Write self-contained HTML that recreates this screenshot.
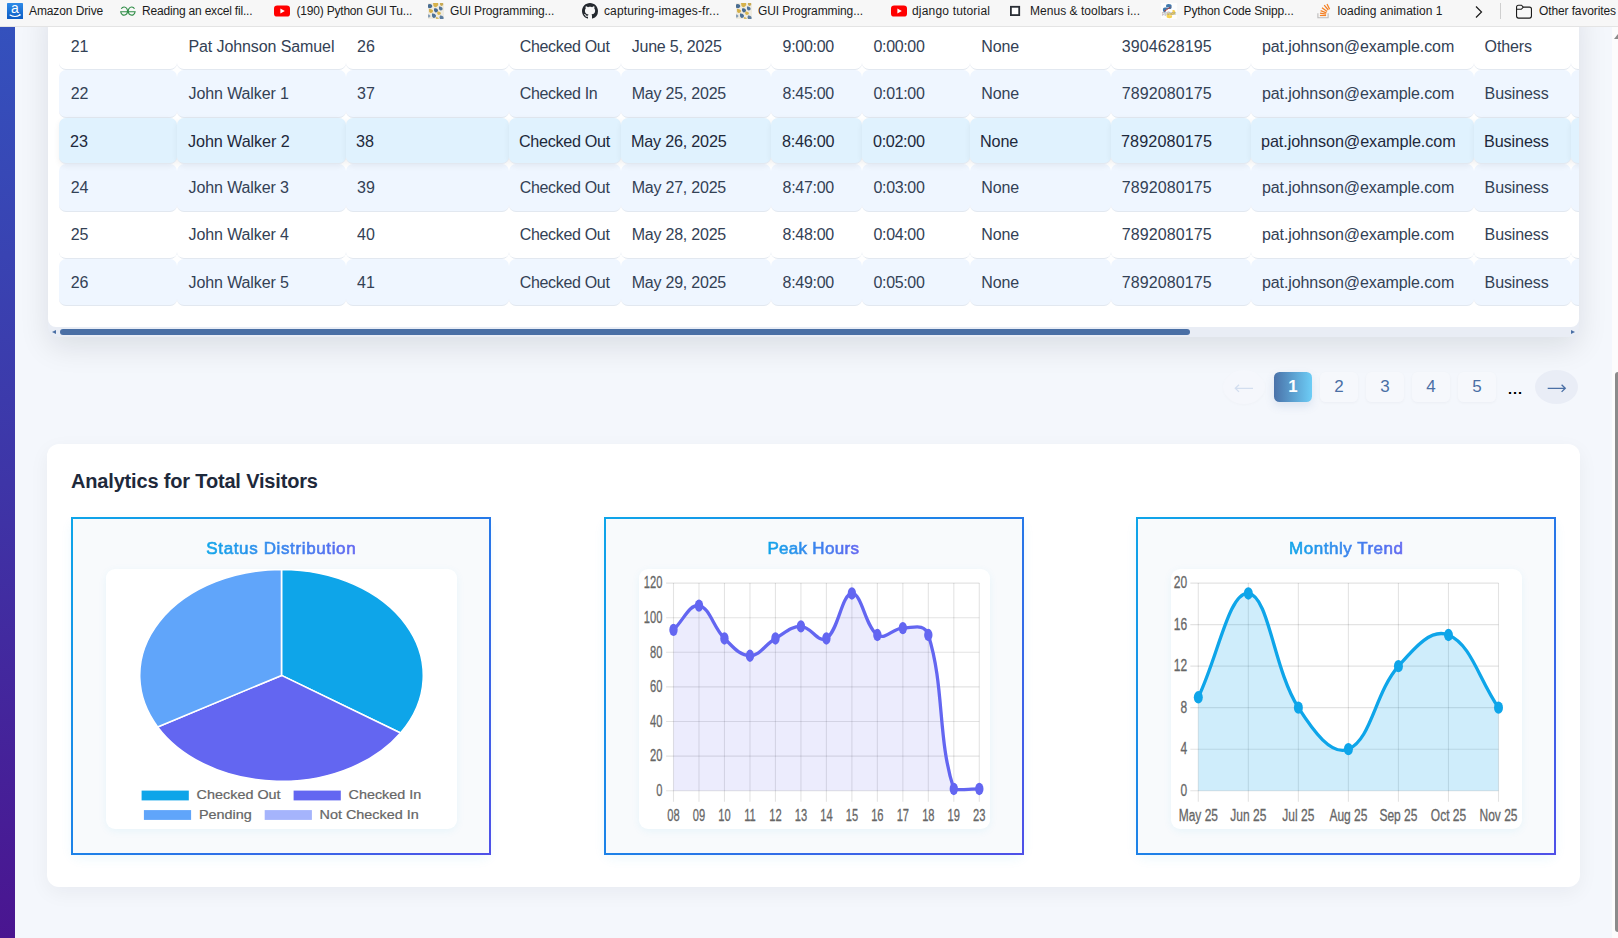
<!DOCTYPE html>
<html lang="en">
<head>
<meta charset="utf-8">
<title>Visitors</title>
<style>
*{box-sizing:border-box}
html,body{margin:0;padding:0}
body{width:1618px;height:938px;overflow:hidden;position:relative;background:#f4f7fc;font-family:"Liberation Sans",sans-serif;color:#334155}
/* browser favourites bar */
#bar{position:absolute;left:0;top:0;width:1618px;height:27px;background:#f7f7f7;border-bottom:1px solid #e4e4e4;z-index:20;font-size:12px;color:#1b1b1b}
#bar .bi{position:absolute;top:3px;width:16px;height:16px;display:block}
#bar .bi svg{display:block}
#bar .bt{position:absolute;top:3px;height:16px;line-height:16px;white-space:nowrap}
#bar .chev{position:absolute;left:1471.5px;top:4px}
#bar .sep{position:absolute;left:1500px;top:3px;width:1px;height:16px;background:#cfcfcf}
/* sidebar */
#side{position:absolute;left:0;top:27px;width:15px;height:911px;background:linear-gradient(180deg,#3451bd 0%,#3e35a7 50%,#4a1590 100%)}
/* table */
#twrap{position:absolute;left:48px;top:0;width:1531px;height:337px;background:#e9edf5;border-radius:0 0 10px 10px;box-shadow:0 10px 30px rgba(10,15,30,.105)}
#tinner{position:absolute;left:0;top:0;width:1531px;height:327px;background:#fff;border-radius:0 0 8px 8px;overflow:hidden}
.tr{position:absolute;left:0;width:1700px}
.td{position:absolute;top:0;height:100%;border-bottom:1px solid #e2e8f0;border-radius:7px;font-size:16px;white-space:nowrap;background:#fff}
.td span{display:inline-block}
.tr.e .td{background:#eff6ff}
.tr.h .td{background:#e0f2fe;color:#1e293b;box-shadow:0 2px 6px rgba(15,23,42,.06)}
.tr.h .td span{transform:translateX(-1px) scale(1.012);transform-origin:left center}
.tr.h{z-index:2}
#hs-thumb{position:absolute;left:12px;top:329px;width:1130px;height:6px;border-radius:3px;background:#4a6fa5}
.hs-arr{position:absolute;top:329.6px;width:0;height:0;border-top:2.6px solid transparent;border-bottom:2.6px solid transparent}
#hs-l{left:4px;border-right:4px solid #4a6fa5}
#hs-r{left:1523px;border-left:4px solid #4a6fa5}
/* pagination */
.pg{position:absolute;top:372px;width:38px;height:30px;border-radius:5.5px;background:#f6f8fc;color:#4a6fa5;font-size:17px;line-height:30px;text-align:center;box-shadow:0 1px 3px rgba(15,23,42,.04)}
.pg.on{background:linear-gradient(90deg,#4a72a9 0%,#6dcdf6 100%);color:#fff;font-weight:bold;font-size:16.8px;box-shadow:0 4px 10px rgba(74,111,165,.15)}
.circ{position:absolute;top:370px;width:42px;height:34px;border-radius:50%;text-align:center}
#prev{left:1222.5px;background:#f5f7fc;box-shadow:0 1px 3px rgba(15,23,42,.025)}
#next{left:1535px;width:43px;background:#e9edf6}
#dots{position:absolute;left:1507.5px;top:378px;font-size:18px;line-height:20px;color:#000;letter-spacing:0;font-weight:normal;text-shadow:0 0 .5px #000}
/* analytics */
#an{position:absolute;left:47px;top:444px;width:1533px;height:443px;background:#fff;border-radius:12px;box-shadow:0 6px 20px rgba(15,23,42,.05)}
#an h2{position:absolute;left:24px;top:24px;margin:0;font-size:20px;line-height:26px;font-weight:bold;color:#1e293b;letter-spacing:-.17px;white-space:nowrap}
.box{position:absolute;top:73px;width:420px;height:338px;border:2px solid transparent;border-image:linear-gradient(135deg,#0ea5e9 0%,#1e80e8 47%,#4f50e8 100%) 1;border-radius:9px;background:#f8fafc;box-shadow:0 4px 12px rgba(14,165,233,.07)}
.box .in{width:416px;height:334px;position:relative}
.box h3{position:absolute;left:0;top:18.6px;width:416px;margin:0;text-align:center;font-size:17px;line-height:22px;font-weight:normal}
.box h3 span{background:linear-gradient(90deg,#0ea5e9,#6366f1);-webkit-background-clip:text;background-clip:text;color:transparent;-webkit-text-fill-color:transparent;-webkit-text-stroke:.65px transparent;padding:0 1px}
.cv{position:absolute;left:32.5px;top:49.5px;background:#fff;border-radius:9px;box-shadow:0 2px 8px rgba(14,165,233,.07);display:block}
.cv text{font-family:"Liberation Sans",sans-serif;font-size:12px;fill:#666;stroke:#666;stroke-width:.2px}
/* page scrollbar */
#vs{position:absolute;left:1612px;top:27px;width:6px;height:911px;background:#fcfcfc}
#vs i{position:absolute;left:3px;top:345px;width:6px;height:560px;border-radius:3px;background:#8b8b8b}
#vs b{position:absolute;left:2px;top:7px;width:0;height:0;border-left:4px solid transparent;border-right:4px solid transparent;border-bottom:5px solid #8b8b8b}
</style>
</head>
<body>
<div id="side"></div>

<div id="twrap">
<div id="tinner">
<div class="tr w" style="top:23px;height:47px;line-height:47px">
<div class="td" style="left:11.0px;width:118.0px;padding-left:11.7px"><span style="letter-spacing:-0.10px">21</span></div>
<div class="td" style="left:129.0px;width:168.5px;padding-left:11.5px"><span style="letter-spacing:-0.10px">Pat Johnson Samuel</span></div>
<div class="td" style="left:297.5px;width:163.5px;padding-left:11.6px"><span style="letter-spacing:-0.10px">26</span></div>
<div class="td" style="left:461.0px;width:111.7px;padding-left:10.7px"><span style="letter-spacing:-0.32px">Checked Out</span></div>
<div class="td" style="left:572.7px;width:150.3px;padding-left:11.0px"><span style="letter-spacing:-0.22px">June 5, 2025</span></div>
<div class="td" style="left:723.0px;width:91.0px;padding-left:11.5px"><span style="letter-spacing:-0.27px">9:00:00</span></div>
<div class="td" style="left:814.0px;width:108.0px;padding-left:11.5px"><span style="letter-spacing:-0.35px">0:00:00</span></div>
<div class="td" style="left:922.0px;width:140.8px;padding-left:11.3px"><span style="letter-spacing:-0.12px">None</span></div>
<div class="td" style="left:1062.8px;width:139.8px;padding-left:11.0px"><span style="letter-spacing:0.10px">3904628195</span></div>
<div class="td" style="left:1202.6px;width:223.0px;padding-left:11.3px"><span style="letter-spacing:-0.08px">pat.johnson@example.com</span></div>
<div class="td" style="left:1425.6px;width:97.1px;padding-left:11.0px"><span style="letter-spacing:-0.12px">Others</span></div>
<div class="td" style="left:1522.7px;width:129.3px;padding-left:12.0px"><span style="letter-spacing:0.00px"></span></div>
</div>
<div class="tr e" style="top:70px;height:48px;line-height:47px">
<div class="td" style="left:11.0px;width:118.0px;padding-left:11.7px"><span style="letter-spacing:-0.10px">22</span></div>
<div class="td" style="left:129.0px;width:168.5px;padding-left:11.5px"><span style="letter-spacing:-0.10px">John Walker 1</span></div>
<div class="td" style="left:297.5px;width:163.5px;padding-left:11.6px"><span style="letter-spacing:-0.10px">37</span></div>
<div class="td" style="left:461.0px;width:111.7px;padding-left:10.7px"><span style="letter-spacing:-0.32px">Checked In</span></div>
<div class="td" style="left:572.7px;width:150.3px;padding-left:11.0px"><span style="letter-spacing:-0.22px">May 25, 2025</span></div>
<div class="td" style="left:723.0px;width:91.0px;padding-left:11.5px"><span style="letter-spacing:-0.27px">8:45:00</span></div>
<div class="td" style="left:814.0px;width:108.0px;padding-left:11.5px"><span style="letter-spacing:-0.35px">0:01:00</span></div>
<div class="td" style="left:922.0px;width:140.8px;padding-left:11.3px"><span style="letter-spacing:-0.12px">None</span></div>
<div class="td" style="left:1062.8px;width:139.8px;padding-left:11.0px"><span style="letter-spacing:0.10px">7892080175</span></div>
<div class="td" style="left:1202.6px;width:223.0px;padding-left:11.3px"><span style="letter-spacing:-0.08px">pat.johnson@example.com</span></div>
<div class="td" style="left:1425.6px;width:97.1px;padding-left:11.0px"><span style="letter-spacing:-0.12px">Business</span></div>
<div class="td" style="left:1522.7px;width:129.3px;padding-left:12.0px"><span style="letter-spacing:0.00px"></span></div>
</div>
<div class="tr h" style="top:118px;height:46px;line-height:47px">
<div class="td" style="left:11.0px;width:118.0px;padding-left:11.7px"><span style="letter-spacing:-0.10px">23</span></div>
<div class="td" style="left:129.0px;width:168.5px;padding-left:11.5px"><span style="letter-spacing:-0.10px">John Walker 2</span></div>
<div class="td" style="left:297.5px;width:163.5px;padding-left:11.6px"><span style="letter-spacing:-0.10px">38</span></div>
<div class="td" style="left:461.0px;width:111.7px;padding-left:10.7px"><span style="letter-spacing:-0.32px">Checked Out</span></div>
<div class="td" style="left:572.7px;width:150.3px;padding-left:11.0px"><span style="letter-spacing:-0.22px">May 26, 2025</span></div>
<div class="td" style="left:723.0px;width:91.0px;padding-left:11.5px"><span style="letter-spacing:-0.27px">8:46:00</span></div>
<div class="td" style="left:814.0px;width:108.0px;padding-left:11.5px"><span style="letter-spacing:-0.35px">0:02:00</span></div>
<div class="td" style="left:922.0px;width:140.8px;padding-left:11.3px"><span style="letter-spacing:-0.12px">None</span></div>
<div class="td" style="left:1062.8px;width:139.8px;padding-left:11.0px"><span style="letter-spacing:0.10px">7892080175</span></div>
<div class="td" style="left:1202.6px;width:223.0px;padding-left:11.3px"><span style="letter-spacing:-0.08px">pat.johnson@example.com</span></div>
<div class="td" style="left:1425.6px;width:97.1px;padding-left:11.0px"><span style="letter-spacing:-0.12px">Business</span></div>
<div class="td" style="left:1522.7px;width:129.3px;padding-left:12.0px"><span style="letter-spacing:0.00px"></span></div>
</div>
<div class="tr e" style="top:164px;height:48px;line-height:47px">
<div class="td" style="left:11.0px;width:118.0px;padding-left:11.7px"><span style="letter-spacing:-0.10px">24</span></div>
<div class="td" style="left:129.0px;width:168.5px;padding-left:11.5px"><span style="letter-spacing:-0.10px">John Walker 3</span></div>
<div class="td" style="left:297.5px;width:163.5px;padding-left:11.6px"><span style="letter-spacing:-0.10px">39</span></div>
<div class="td" style="left:461.0px;width:111.7px;padding-left:10.7px"><span style="letter-spacing:-0.32px">Checked Out</span></div>
<div class="td" style="left:572.7px;width:150.3px;padding-left:11.0px"><span style="letter-spacing:-0.22px">May 27, 2025</span></div>
<div class="td" style="left:723.0px;width:91.0px;padding-left:11.5px"><span style="letter-spacing:-0.27px">8:47:00</span></div>
<div class="td" style="left:814.0px;width:108.0px;padding-left:11.5px"><span style="letter-spacing:-0.35px">0:03:00</span></div>
<div class="td" style="left:922.0px;width:140.8px;padding-left:11.3px"><span style="letter-spacing:-0.12px">None</span></div>
<div class="td" style="left:1062.8px;width:139.8px;padding-left:11.0px"><span style="letter-spacing:0.10px">7892080175</span></div>
<div class="td" style="left:1202.6px;width:223.0px;padding-left:11.3px"><span style="letter-spacing:-0.08px">pat.johnson@example.com</span></div>
<div class="td" style="left:1425.6px;width:97.1px;padding-left:11.0px"><span style="letter-spacing:-0.12px">Business</span></div>
<div class="td" style="left:1522.7px;width:129.3px;padding-left:12.0px"><span style="letter-spacing:0.00px"></span></div>
</div>
<div class="tr w" style="top:212px;height:47px;line-height:45px">
<div class="td" style="left:11.0px;width:118.0px;padding-left:11.7px"><span style="letter-spacing:-0.10px">25</span></div>
<div class="td" style="left:129.0px;width:168.5px;padding-left:11.5px"><span style="letter-spacing:-0.10px">John Walker 4</span></div>
<div class="td" style="left:297.5px;width:163.5px;padding-left:11.6px"><span style="letter-spacing:-0.10px">40</span></div>
<div class="td" style="left:461.0px;width:111.7px;padding-left:10.7px"><span style="letter-spacing:-0.32px">Checked Out</span></div>
<div class="td" style="left:572.7px;width:150.3px;padding-left:11.0px"><span style="letter-spacing:-0.22px">May 28, 2025</span></div>
<div class="td" style="left:723.0px;width:91.0px;padding-left:11.5px"><span style="letter-spacing:-0.27px">8:48:00</span></div>
<div class="td" style="left:814.0px;width:108.0px;padding-left:11.5px"><span style="letter-spacing:-0.35px">0:04:00</span></div>
<div class="td" style="left:922.0px;width:140.8px;padding-left:11.3px"><span style="letter-spacing:-0.12px">None</span></div>
<div class="td" style="left:1062.8px;width:139.8px;padding-left:11.0px"><span style="letter-spacing:0.10px">7892080175</span></div>
<div class="td" style="left:1202.6px;width:223.0px;padding-left:11.3px"><span style="letter-spacing:-0.08px">pat.johnson@example.com</span></div>
<div class="td" style="left:1425.6px;width:97.1px;padding-left:11.0px"><span style="letter-spacing:-0.12px">Business</span></div>
<div class="td" style="left:1522.7px;width:129.3px;padding-left:12.0px"><span style="letter-spacing:0.00px"></span></div>
</div>
<div class="tr e" style="top:259px;height:47px;line-height:47px">
<div class="td" style="left:11.0px;width:118.0px;padding-left:11.7px"><span style="letter-spacing:-0.10px">26</span></div>
<div class="td" style="left:129.0px;width:168.5px;padding-left:11.5px"><span style="letter-spacing:-0.10px">John Walker 5</span></div>
<div class="td" style="left:297.5px;width:163.5px;padding-left:11.6px"><span style="letter-spacing:-0.10px">41</span></div>
<div class="td" style="left:461.0px;width:111.7px;padding-left:10.7px"><span style="letter-spacing:-0.32px">Checked Out</span></div>
<div class="td" style="left:572.7px;width:150.3px;padding-left:11.0px"><span style="letter-spacing:-0.22px">May 29, 2025</span></div>
<div class="td" style="left:723.0px;width:91.0px;padding-left:11.5px"><span style="letter-spacing:-0.27px">8:49:00</span></div>
<div class="td" style="left:814.0px;width:108.0px;padding-left:11.5px"><span style="letter-spacing:-0.35px">0:05:00</span></div>
<div class="td" style="left:922.0px;width:140.8px;padding-left:11.3px"><span style="letter-spacing:-0.12px">None</span></div>
<div class="td" style="left:1062.8px;width:139.8px;padding-left:11.0px"><span style="letter-spacing:0.10px">7892080175</span></div>
<div class="td" style="left:1202.6px;width:223.0px;padding-left:11.3px"><span style="letter-spacing:-0.08px">pat.johnson@example.com</span></div>
<div class="td" style="left:1425.6px;width:97.1px;padding-left:11.0px"><span style="letter-spacing:-0.12px">Business</span></div>
<div class="td" style="left:1522.7px;width:129.3px;padding-left:12.0px"><span style="letter-spacing:0.00px"></span></div>
</div>
</div>
<div class="hs-arr" id="hs-l"></div>
<div id="hs-thumb"></div>
<div class="hs-arr" id="hs-r"></div>
</div>

<div class="circ" id="prev"><svg width="42" height="34" viewBox="0 0 42 34"><path d="M30 18.3H12.3M16 14.7l-3.7 3.6 3.7 3.6" fill="none" stroke="#d3deef" stroke-width="1.3"/></svg></div>
<div class="pg on" style="left:1274px">1</div>
<div class="pg" style="left:1320px">2</div>
<div class="pg" style="left:1366px">3</div>
<div class="pg" style="left:1412px">4</div>
<div class="pg" style="left:1458px">5</div>
<div id="dots">...</div>
<div class="circ" id="next"><svg width="42" height="34" viewBox="0 0 42 34"><path d="M11.7 18.3h17.6M25.6 14.7l3.7 3.6-3.7 3.6" fill="none" stroke="#4a6fa5" stroke-width="1.3"/></svg></div>

<div id="an">
<h2>Analytics for Total Visitors</h2>
<div class="box" style="left:24.3px"><div class="in"><h3><span style="letter-spacing:.63px">Status Distribution</span></h3>
<svg class="cv" width="351" height="260" viewBox="0 0 351 260">
<path d="M175.50 106.40 L175.50 0.50 A141.80 105.90 0 0 1 294.56 163.92 Z" fill="#0ea5e9" stroke="#fff" stroke-width="1.6" stroke-linejoin="round"/>
<path d="M175.50 106.40 L294.56 163.92 A141.80 105.90 0 0 1 51.60 157.90 Z" fill="#6366f1" stroke="#fff" stroke-width="1.6" stroke-linejoin="round"/>
<path d="M175.50 106.40 L51.60 157.90 A141.80 105.90 0 0 1 175.50 0.50 Z" fill="#60a5fa" stroke="#fff" stroke-width="1.6" stroke-linejoin="round"/>
<rect x="35.60" y="221.60" width="47.2" height="9.8" fill="#0ea5e9"/>
<text transform="translate(90.60 226.00) scale(1.2 1)" y="4.2">Checked Out</text>
<rect x="187.60" y="221.60" width="47.2" height="9.8" fill="#6366f1"/>
<text transform="translate(242.50 226.00) scale(1.2 1)" y="4.2">Checked In</text>
<rect x="37.90" y="241.10" width="47.2" height="9.8" fill="#60a5fa"/>
<text transform="translate(92.90 245.50) scale(1.2 1)" y="4.2">Pending</text>
<rect x="158.70" y="241.10" width="47.2" height="9.8" fill="#a5b4fc"/>
<text transform="translate(213.50 245.50) scale(1.2 1)" y="4.2">Not Checked In</text>
</svg>
</div></div>
<div class="box" style="left:557.3px"><div class="in"><h3><span style="letter-spacing:.3px;position:relative;left:-1px">Peak Hours</span></h3>
<svg class="cv" width="351" height="260" viewBox="0 0 351 260">
<g stroke="rgba(0,0,0,0.11)" stroke-width="1.1"><line x1="34.50" y1="14.10" x2="34.50" y2="232.66"/><line x1="59.98" y1="14.10" x2="59.98" y2="232.66"/><line x1="85.47" y1="14.10" x2="85.47" y2="232.66"/><line x1="110.95" y1="14.10" x2="110.95" y2="232.66"/><line x1="136.43" y1="14.10" x2="136.43" y2="232.66"/><line x1="161.92" y1="14.10" x2="161.92" y2="232.66"/><line x1="187.40" y1="14.10" x2="187.40" y2="232.66"/><line x1="212.88" y1="14.10" x2="212.88" y2="232.66"/><line x1="238.37" y1="14.10" x2="238.37" y2="232.66"/><line x1="263.85" y1="14.10" x2="263.85" y2="232.66"/><line x1="289.33" y1="14.10" x2="289.33" y2="232.66"/><line x1="314.82" y1="14.10" x2="314.82" y2="232.66"/><line x1="340.30" y1="14.10" x2="340.30" y2="232.66"/><line x1="27.06" y1="221.70" x2="340.30" y2="221.70"/><line x1="27.06" y1="187.10" x2="340.30" y2="187.10"/><line x1="27.06" y1="152.50" x2="340.30" y2="152.50"/><line x1="27.06" y1="117.90" x2="340.30" y2="117.90"/><line x1="27.06" y1="83.30" x2="340.30" y2="83.30"/><line x1="27.06" y1="48.70" x2="340.30" y2="48.70"/><line x1="27.06" y1="14.10" x2="340.30" y2="14.10"/></g>
<path d="M34.50 60.81 C44.69 51.12 50.35 34.96 59.98 36.59 C70.74 38.42 74.32 58.48 85.47 69.46 C94.70 78.55 100.76 86.76 110.95 86.76 C121.14 86.76 126.00 75.48 136.43 69.46 C146.39 63.72 151.72 57.35 161.92 57.35 C172.11 57.35 179.20 74.75 187.40 69.46 C199.58 61.60 202.46 25.19 212.88 24.48 C222.84 23.80 226.25 57.77 238.37 66.00 C246.63 71.61 253.66 59.08 263.85 59.08 C274.04 59.08 285.38 53.51 289.33 66.00 C305.76 117.86 298.33 170.18 314.82 219.97 C318.72 221.70 330.11 219.97 340.30 219.97 L340.30 221.70 L34.50 221.70 Z" fill="rgba(99,102,241,0.12)"/>
<path d="M34.50 60.81 C44.69 51.12 50.35 34.96 59.98 36.59 C70.74 38.42 74.32 58.48 85.47 69.46 C94.70 78.55 100.76 86.76 110.95 86.76 C121.14 86.76 126.00 75.48 136.43 69.46 C146.39 63.72 151.72 57.35 161.92 57.35 C172.11 57.35 179.20 74.75 187.40 69.46 C199.58 61.60 202.46 25.19 212.88 24.48 C222.84 23.80 226.25 57.77 238.37 66.00 C246.63 71.61 253.66 59.08 263.85 59.08 C274.04 59.08 285.38 53.51 289.33 66.00 C305.76 117.86 298.33 170.18 314.82 219.97 C318.72 221.70 330.11 219.97 340.30 219.97" fill="none" stroke="#6366f1" stroke-width="3.3" stroke-linejoin="round" stroke-linecap="round"/>
<ellipse cx="34.50" cy="60.81" rx="4.19" ry="6.17" fill="#6366f1"/>
<ellipse cx="59.98" cy="36.59" rx="4.19" ry="6.17" fill="#6366f1"/>
<ellipse cx="85.47" cy="69.46" rx="4.19" ry="6.17" fill="#6366f1"/>
<ellipse cx="110.95" cy="86.76" rx="4.19" ry="6.17" fill="#6366f1"/>
<ellipse cx="136.43" cy="69.46" rx="4.19" ry="6.17" fill="#6366f1"/>
<ellipse cx="161.92" cy="57.35" rx="4.19" ry="6.17" fill="#6366f1"/>
<ellipse cx="187.40" cy="69.46" rx="4.19" ry="6.17" fill="#6366f1"/>
<ellipse cx="212.88" cy="24.48" rx="4.19" ry="6.17" fill="#6366f1"/>
<ellipse cx="238.37" cy="66.00" rx="4.19" ry="6.17" fill="#6366f1"/>
<ellipse cx="263.85" cy="59.08" rx="4.19" ry="6.17" fill="#6366f1"/>
<ellipse cx="289.33" cy="66.00" rx="4.19" ry="6.17" fill="#6366f1"/>
<ellipse cx="314.82" cy="219.97" rx="4.19" ry="6.17" fill="#6366f1"/>
<ellipse cx="340.30" cy="219.97" rx="4.19" ry="6.17" fill="#6366f1"/>
<text transform="translate(23.40 220.80) scale(0.930 1.425)" text-anchor="end" y="4.3">0</text>
<text transform="translate(23.40 186.20) scale(0.930 1.425)" text-anchor="end" y="4.3">20</text>
<text transform="translate(23.40 151.60) scale(0.930 1.425)" text-anchor="end" y="4.3">40</text>
<text transform="translate(23.40 117.00) scale(0.930 1.425)" text-anchor="end" y="4.3">60</text>
<text transform="translate(23.40 82.40) scale(0.930 1.425)" text-anchor="end" y="4.3">80</text>
<text transform="translate(23.40 47.80) scale(0.930 1.425)" text-anchor="end" y="4.3">100</text>
<text transform="translate(23.40 13.20) scale(0.930 1.425)" text-anchor="end" y="4.3">120</text>
<text transform="translate(34.50 246.20) scale(0.930 1.425)" text-anchor="middle" y="4.3">08</text>
<text transform="translate(59.98 246.20) scale(0.930 1.425)" text-anchor="middle" y="4.3">09</text>
<text transform="translate(85.47 246.20) scale(0.930 1.425)" text-anchor="middle" y="4.3">10</text>
<text transform="translate(110.95 246.20) scale(0.930 1.425)" text-anchor="middle" y="4.3">11</text>
<text transform="translate(136.43 246.20) scale(0.930 1.425)" text-anchor="middle" y="4.3">12</text>
<text transform="translate(161.92 246.20) scale(0.930 1.425)" text-anchor="middle" y="4.3">13</text>
<text transform="translate(187.40 246.20) scale(0.930 1.425)" text-anchor="middle" y="4.3">14</text>
<text transform="translate(212.88 246.20) scale(0.930 1.425)" text-anchor="middle" y="4.3">15</text>
<text transform="translate(238.37 246.20) scale(0.930 1.425)" text-anchor="middle" y="4.3">16</text>
<text transform="translate(263.85 246.20) scale(0.930 1.425)" text-anchor="middle" y="4.3">17</text>
<text transform="translate(289.33 246.20) scale(0.930 1.425)" text-anchor="middle" y="4.3">18</text>
<text transform="translate(314.82 246.20) scale(0.930 1.425)" text-anchor="middle" y="4.3">19</text>
<text transform="translate(340.30 246.20) scale(0.930 1.425)" text-anchor="middle" y="4.3">23</text>
</svg>
</div></div>
<div class="box" style="left:1089.3px"><div class="in"><h3><span style="letter-spacing:.52px">Monthly Trend</span></h3>
<svg class="cv" width="351" height="260" viewBox="0 0 351 260">
<g stroke="rgba(0,0,0,0.11)" stroke-width="1.1"><line x1="27.30" y1="14.10" x2="27.30" y2="232.66"/><line x1="77.33" y1="14.10" x2="77.33" y2="232.66"/><line x1="127.37" y1="14.10" x2="127.37" y2="232.66"/><line x1="177.40" y1="14.10" x2="177.40" y2="232.66"/><line x1="227.43" y1="14.10" x2="227.43" y2="232.66"/><line x1="277.47" y1="14.10" x2="277.47" y2="232.66"/><line x1="327.50" y1="14.10" x2="327.50" y2="232.66"/><line x1="19.30" y1="221.70" x2="327.50" y2="221.70"/><line x1="19.30" y1="180.18" x2="327.50" y2="180.18"/><line x1="19.30" y1="138.66" x2="327.50" y2="138.66"/><line x1="19.30" y1="97.14" x2="327.50" y2="97.14"/><line x1="19.30" y1="55.62" x2="327.50" y2="55.62"/><line x1="19.30" y1="14.10" x2="327.50" y2="14.10"/></g>
<path d="M27.30 128.28 C47.31 86.76 58.00 22.47 77.33 24.48 C98.03 26.63 102.38 99.78 127.37 138.66 C142.40 162.06 160.32 187.27 177.40 180.18 C200.35 170.66 203.88 124.02 227.43 97.14 C243.90 78.35 260.26 58.86 277.47 66.00 C300.29 75.47 307.49 109.60 327.50 138.66 L327.50 221.70 L27.30 221.70 Z" fill="rgba(14,165,233,0.2)"/>
<path d="M27.30 128.28 C47.31 86.76 58.00 22.47 77.33 24.48 C98.03 26.63 102.38 99.78 127.37 138.66 C142.40 162.06 160.32 187.27 177.40 180.18 C200.35 170.66 203.88 124.02 227.43 97.14 C243.90 78.35 260.26 58.86 277.47 66.00 C300.29 75.47 307.49 109.60 327.50 138.66" fill="none" stroke="#0ea5e9" stroke-width="3.3" stroke-linejoin="round" stroke-linecap="round"/>
<ellipse cx="27.30" cy="128.28" rx="4.50" ry="6.17" fill="#0ea5e9"/>
<ellipse cx="77.33" cy="24.48" rx="4.50" ry="6.17" fill="#0ea5e9"/>
<ellipse cx="127.37" cy="138.66" rx="4.50" ry="6.17" fill="#0ea5e9"/>
<ellipse cx="177.40" cy="180.18" rx="4.50" ry="6.17" fill="#0ea5e9"/>
<ellipse cx="227.43" cy="97.14" rx="4.50" ry="6.17" fill="#0ea5e9"/>
<ellipse cx="277.47" cy="66.00" rx="4.50" ry="6.17" fill="#0ea5e9"/>
<ellipse cx="327.50" cy="138.66" rx="4.50" ry="6.17" fill="#0ea5e9"/>
<text transform="translate(16.20 220.80) scale(1.000 1.425)" text-anchor="end" y="4.3">0</text>
<text transform="translate(16.20 179.28) scale(1.000 1.425)" text-anchor="end" y="4.3">4</text>
<text transform="translate(16.20 137.76) scale(1.000 1.425)" text-anchor="end" y="4.3">8</text>
<text transform="translate(16.20 96.24) scale(1.000 1.425)" text-anchor="end" y="4.3">12</text>
<text transform="translate(16.20 54.72) scale(1.000 1.425)" text-anchor="end" y="4.3">16</text>
<text transform="translate(16.20 13.20) scale(1.000 1.425)" text-anchor="end" y="4.3">20</text>
<text transform="translate(27.30 246.20) scale(1.000 1.425)" text-anchor="middle" y="4.3">May 25</text>
<text transform="translate(77.33 246.20) scale(1.000 1.425)" text-anchor="middle" y="4.3">Jun 25</text>
<text transform="translate(127.37 246.20) scale(1.000 1.425)" text-anchor="middle" y="4.3">Jul 25</text>
<text transform="translate(177.40 246.20) scale(1.000 1.425)" text-anchor="middle" y="4.3">Aug 25</text>
<text transform="translate(227.43 246.20) scale(1.000 1.425)" text-anchor="middle" y="4.3">Sep 25</text>
<text transform="translate(277.47 246.20) scale(1.000 1.425)" text-anchor="middle" y="4.3">Oct 25</text>
<text transform="translate(327.50 246.20) scale(1.000 1.425)" text-anchor="middle" y="4.3">Nov 25</text>
</svg>
</div></div>
</div>

<div id="bar">
<span class="bi" style="left:7.0px"><svg width="16" height="16" viewBox="0 0 16 16"><defs><linearGradient id="ag" x1="0" y1="0" x2="0" y2="1"><stop offset="0" stop-color="#2f8be8"/><stop offset="1" stop-color="#0c5cc4"/></linearGradient></defs><rect width="16" height="16" rx=".6" fill="url(#ag)"/><text x="8" y="10.2" text-anchor="middle" font-family="Liberation Sans, sans-serif" font-size="14" fill="#fff">a</text><path d="M3 12 Q8 15 13 12" stroke="#fff" stroke-width="1.1" fill="none" stroke-linecap="round"/><path d="M11.8 11.3l1.5.2-.6 1.4" stroke="#fff" stroke-width=".8" fill="none"/></svg></span><span class="bt" style="left:29.0px;letter-spacing:-0.10px">Amazon Drive</span>
<span class="bi" style="left:120.0px"><svg width="16" height="16" viewBox="0 0 16 16"><g fill="none" stroke="#2f8d46" stroke-width="1.15"><path d="M1.3 5.7 A3.45 4.1 0 1 1 .7 8.7 H7.9"/><path d="M14.5 5.7 A3.45 4.1 0 1 0 15.1 8.7 H7.9"/></g></svg></span><span class="bt" style="left:142.0px;letter-spacing:-0.19px">Reading an excel fil...</span>
<span class="bi" style="left:274.0px"><svg width="16" height="16" viewBox="0 0 16 16"><rect x="0" y="2.4" width="16" height="11.2" rx="3.2" fill="#ff0000"/><path d="M6.4 5.4 L10.8 8 L6.4 10.6 Z" fill="#fff"/></svg></span><span class="bt" style="left:296.5px;letter-spacing:-0.20px">(190) Python GUI Tu...</span>
<span class="bi" style="left:427.7px"><svg width="16" height="16" viewBox="0 0 16 16"><defs><filter id="bl" x="-20%" y="-20%" width="140%" height="140%"><feGaussianBlur stdDeviation=".45"/></filter></defs><rect width="16" height="16" fill="#eeebe1"/><g filter="url(#bl)"><path d="M0 1.5 Q2 .5 4 2 Q5 4 3 5 Q1 5.5 0 4.5Z" fill="#4a6d92"/><path d="M5 0 H10 Q11 2 9 3.5 Q7 5 5.5 3Z" fill="#d6b24c"/><path d="M12 0 H15 Q16 2 14 3 Q12.5 3 12 1.5Z" fill="#c8aa55"/><path d="M11 3.5 Q13.5 3 14.5 5 Q15 7.5 12.5 7.5 Q10.5 7 11 3.5Z" fill="#52749a"/><path d="M1 6 Q4 5.5 5 7.5 Q5 10 2.5 10 Q.5 9 1 6Z" fill="#d4ae45"/><path d="M6 5.5 Q9 4.5 10 7 Q10 9.5 7.5 9.5 Q5.5 8.5 6 5.5Z" fill="#456990"/><path d="M9.5 8.5 Q12 8 13 10 Q13 12 10.5 12 Q8.5 11 9.5 8.5Z" fill="#d9b650"/><path d="M4 10.5 Q7 10 8 12.5 Q8 15 5.5 15 Q3.5 14 4 10.5Z" fill="#4e7297"/><path d="M0 11.5 Q2 11 2.5 13 Q2 15 0 14.5Z" fill="#8aa0b6"/><path d="M12 12.5 Q14.5 12 15.5 14 L15.5 16 H12 Q11 14 12 12.5Z" fill="#5b7c9f"/><path d="M8 14 Q10 13.5 11 16 H8Z" fill="#d8bd6a"/></g></svg></span><span class="bt" style="left:450.0px;letter-spacing:-0.14px">GUI Programming...</span>
<span class="bi" style="left:582.0px"><svg width="16" height="16" viewBox="0 0 16 16"><path fill="#24292f" d="M8 0C3.58 0 0 3.58 0 8c0 3.54 2.29 6.53 5.47 7.59.4.07.55-.17.55-.38 0-.19-.01-.82-.01-1.49-2.01.37-2.53-.49-2.69-.94-.09-.23-.48-.94-.82-1.13-.28-.15-.68-.52-.01-.53.63-.01 1.08.58 1.23.82.72 1.21 1.87.87 2.33.66.07-.52.28-.87.51-1.07-1.78-.2-3.64-.89-3.64-3.95 0-.87.31-1.59.82-2.15-.08-.2-.36-1.02.08-2.12 0 0 .67-.21 2.2.82.64-.18 1.32-.27 2-.27.68 0 1.36.09 2 .27 1.53-1.04 2.2-.82 2.2-.82.44 1.1.16 1.92.08 2.12.51.56.82 1.27.82 2.15 0 3.07-1.87 3.75-3.65 3.95.29.25.54.73.54 1.48 0 1.07-.01 1.93-.01 2.2 0 .21.15.46.55.38A8.013 8.013 0 0016 8c0-4.42-3.58-8-8-8z"/></svg></span><span class="bt" style="left:604.0px;letter-spacing:0.12px">capturing-images-fr...</span>
<span class="bi" style="left:736.0px"><svg width="16" height="16" viewBox="0 0 16 16"><defs><filter id="bl" x="-20%" y="-20%" width="140%" height="140%"><feGaussianBlur stdDeviation=".45"/></filter></defs><rect width="16" height="16" fill="#eeebe1"/><g filter="url(#bl)"><path d="M0 1.5 Q2 .5 4 2 Q5 4 3 5 Q1 5.5 0 4.5Z" fill="#4a6d92"/><path d="M5 0 H10 Q11 2 9 3.5 Q7 5 5.5 3Z" fill="#d6b24c"/><path d="M12 0 H15 Q16 2 14 3 Q12.5 3 12 1.5Z" fill="#c8aa55"/><path d="M11 3.5 Q13.5 3 14.5 5 Q15 7.5 12.5 7.5 Q10.5 7 11 3.5Z" fill="#52749a"/><path d="M1 6 Q4 5.5 5 7.5 Q5 10 2.5 10 Q.5 9 1 6Z" fill="#d4ae45"/><path d="M6 5.5 Q9 4.5 10 7 Q10 9.5 7.5 9.5 Q5.5 8.5 6 5.5Z" fill="#456990"/><path d="M9.5 8.5 Q12 8 13 10 Q13 12 10.5 12 Q8.5 11 9.5 8.5Z" fill="#d9b650"/><path d="M4 10.5 Q7 10 8 12.5 Q8 15 5.5 15 Q3.5 14 4 10.5Z" fill="#4e7297"/><path d="M0 11.5 Q2 11 2.5 13 Q2 15 0 14.5Z" fill="#8aa0b6"/><path d="M12 12.5 Q14.5 12 15.5 14 L15.5 16 H12 Q11 14 12 12.5Z" fill="#5b7c9f"/><path d="M8 14 Q10 13.5 11 16 H8Z" fill="#d8bd6a"/></g></svg></span><span class="bt" style="left:758.0px;letter-spacing:-0.10px">GUI Programming...</span>
<span class="bi" style="left:890.5px"><svg width="16" height="16" viewBox="0 0 16 16"><rect x="0" y="2.4" width="16" height="11.2" rx="3.2" fill="#ff0000"/><path d="M6.4 5.4 L10.8 8 L6.4 10.6 Z" fill="#fff"/></svg></span><span class="bt" style="left:912.0px;letter-spacing:0.18px">django tutorial</span>
<span class="bi" style="left:1010.0px"><svg width="16" height="16" viewBox="0 0 16 16"><rect x=".9" y="3.8" width="8.3" height="8.3" fill="#fff" stroke="#2b2f36" stroke-width="1.8"/></svg></span><span class="bt" style="left:1030.0px;letter-spacing:0.03px">Menus &amp; toolbars i...</span>
<span class="bi" style="left:1161.0px"><svg width="16" height="16" viewBox="0 0 16 16"><rect width="16" height="16" fill="#fdfdfd"/><path d="M7.6 1c-1.9 0-2.5.8-2.5 1.7v1.2h2.7v.5H3.8c-1.1 0-1.9.8-1.9 2.4s.7 2.4 1.7 2.4h1.1V7.7c0-.9.8-1.7 1.8-1.7h2.6c.9 0 1.5-.7 1.5-1.5V2.7c0-.9-.8-1.7-3-1.7z" fill="#3f78ad"/><path d="M8.6 15.2c1.9 0 2.5-.8 2.5-1.7v-1.2H8.4v-.5h4c1.1 0 1.9-.8 1.9-2.4s-.7-2.4-1.7-2.4h-1.1v1.5c0 .9-.8 1.7-1.8 1.7H7.1c-.9 0-1.5.7-1.5 1.5v1.8c0 .9.8 1.7 3 1.7z" fill="#f7d251"/><path d="M3.2 8.4L9.6 4" stroke="#b8403a" stroke-width="1"/><text x="8" y="11.6" text-anchor="middle" font-family="Liberation Sans, sans-serif" font-size="4.6" fill="#8a8f96" textLength="14" lengthAdjust="spacingAndGlyphs">python</text></svg></span><span class="bt" style="left:1183.6px;letter-spacing:-0.17px">Python Code Snipp...</span>
<span class="bi" style="left:1317.0px"><svg width="16" height="16" viewBox="0 0 16 16"><path d="M.9 10.3v4.4h10.2v-4.4" fill="none" stroke="#bcbbbb" stroke-width="1.1"/><g stroke="#f48024" stroke-width="1.25"><path d="M2.9 12.5h6.2"/><path d="M3 10.2l6.1.9"/><path d="M3.6 7.6l5.8 2.2"/><path d="M5 4.8l5.1 3.6"/><path d="M7.2 2.1l4.1 4.9"/><path d="M10 .9l2.6 5.4"/></g></svg></span><span class="bt" style="left:1337.5px;letter-spacing:0.05px">loading animation 1</span>
<svg class="chev" width="16" height="16" viewBox="0 0 16 16"><path d="M4 2.5L9.5 8 4 13.5" fill="none" stroke="#1b1b1b" stroke-width="1.2"/></svg>
<span class="sep"></span>
<span class="bi" style="left:1516px"><svg width="16" height="16" viewBox="0 0 16 16"><path d="M.55 4.2c0-1.1.9-2 2-2h2.9l1.9 1.9h6.1c1.1 0 2 .9 2 2v7c0 1.1-.9 2-2 2H2.55c-1.1 0-2-.9-2-2z" fill="none" stroke="#1b1b1b" stroke-width="1.1"/><path d="M.55 6.3h4.7l2.1-2.2" fill="none" stroke="#1b1b1b" stroke-width="1.1"/></svg></span>
<span class="bt" style="left:1539px;letter-spacing:-.12px">Other favorites</span>
</div>

<div id="vs"><b></b><i></i></div>
</body>
</html>
